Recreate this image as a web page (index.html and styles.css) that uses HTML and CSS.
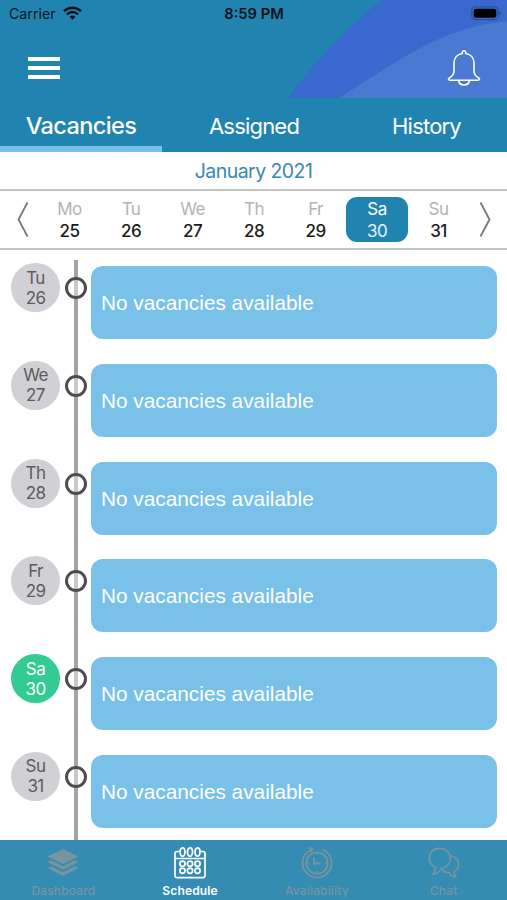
FILE: index.html
```html
<!DOCTYPE html>
<html lang="en">
<head>
    <meta charset="UTF-8">
    <meta name="viewport" content="width=device-width, initial-scale=1.0">
    <title>Schedule</title>
    <link rel="stylesheet" href="styles.css">
</head>
<body>

    <header class="header">
        <svg class="header-bg" viewBox="0 0 507 98">
            <path d="M288 98C312 66 342 30 382 0H507V98Z" fill="#3969ce"/>
            <path d="M339 98C390 67 440 26 507 21.500V98Z" fill="#4a79d1"/>
        </svg>
        <div class="status-bar">
            <div class="carrier">
                <span>Carrier</span>
                <svg width="19" height="14" viewBox="0 0 19 14" fill="none" stroke="#071217" stroke-width="2.500">
                    <path d="M1 5.200C5.800 .6 13.200 .6 18 5.200"/>
                    <path d="M4 8.300C7.200 5.300 11.800 5.300 15 8.300"/>
                    <path d="M6.500 10.700C8.300 9 10.700 9 12.500 10.700L9.500 13.700Z" fill="#071217" stroke="none"/>
                </svg>
            </div>
            <span class="time">8:59 PM</span>
            <svg class="battery" width="31" height="15" viewBox="0 0 31 15">
                <rect x=".8" y=".8" width="26.400" height="12.900" rx="4" fill="none" stroke="#2a4d98" stroke-width="1.300"/>
                <rect x="2.700" y="2.700" width="22.600" height="9.100" rx="2.300" fill="#000"/>
                <path d="M28.500 5.200C30.500 6 30.500 8.500 28.500 9.300Z" fill="#2a4d98"/>
            </svg>
        </div>
        <div class="toolbar">
            <div class="menu"><i></i><i></i><i></i></div>
            <svg class="bell" width="34" height="38" viewBox="0 0 34 38" fill="none" stroke="#fff" stroke-width="1.600" stroke-linejoin="round">
                <path d="M15.300 4.500V3.500C15.300 1.200 18.700 1.200 18.700 3.500V4.500C23.800 5.300 27 9 27 14V22C27 26 29 27.500 31.600 28.900C33 29.800 32.700 31.200 31 31.200H3C1.300 31.200 1 29.800 2.400 28.900C5 27.500 7 26 7 22V14C7 9 10.200 5.300 15.300 4.500Z"/>
                <path d="M11.500 31.500C12.500 37.500 21.500 37.500 22.500 31.500"/>
            </svg>
        </div>
    </header>

    <nav class="tabs">
        <a class="tab active"><span>Vacancies</span></a>
        <a class="tab assigned"><span>Assigned</span></a>
        <a class="tab history"><span>History</span></a>
    </nav>

    <div class="month">January 2021</div>

    <div class="week">
        <svg class="arrow" width="12" height="37" viewBox="0 0 12 37"><path d="M10.500 1.500L1.500 18.500L10.500 35.500"/></svg>
        <div class="days">
            <div class="day"><span>Mo</span><b>25</b></div>
            <div class="day"><span>Tu</span><b>26</b></div>
            <div class="day"><span>We</span><b>27</b></div>
            <div class="day"><span>Th</span><b>28</b></div>
            <div class="day"><span>Fr</span><b>29</b></div>
            <div class="day selected"><span>Sa</span><b>30</b></div>
            <div class="day"><span>Su</span><b>31</b></div>
        </div>
        <svg class="arrow" width="12" height="37" viewBox="0 0 12 37"><path d="M1.500 1.500L10.500 18.500L1.500 35.500"/></svg>
    </div>

    <main class="timeline">
        <div class="row">
            <div class="date"><span>Tu</span><span>26</span></div>
            <div class="dot"></div>
            <div class="card">No vacancies available</div>
        </div>
        <div class="row">
            <div class="date"><span>We</span><span>27</span></div>
            <div class="dot"></div>
            <div class="card">No vacancies available</div>
        </div>
        <div class="row">
            <div class="date"><span>Th</span><span>28</span></div>
            <div class="dot"></div>
            <div class="card">No vacancies available</div>
        </div>
        <div class="row">
            <div class="date"><span>Fr</span><span>29</span></div>
            <div class="dot"></div>
            <div class="card">No vacancies available</div>
        </div>
        <div class="row">
            <div class="date today"><span>Sa</span><span>30</span></div>
            <div class="dot"></div>
            <div class="card">No vacancies available</div>
        </div>
        <div class="row">
            <div class="date"><span>Su</span><span>31</span></div>
            <div class="dot"></div>
            <div class="card">No vacancies available</div>
        </div>
    </main>

    <nav class="bottom-nav">
        <a class="nav-item">
            <svg width="34" height="34" viewBox="0 0 34 34" fill="currentColor">
                <path d="M17 3L32.500 10.500L17 18L1.500 10.500Z"/>
                <path d="M1.500 16L5.200 14.200L17 20L28.800 14.200L32.500 16L17 23.800Z"/>
                <path d="M1.500 22L5.200 20.200L17 26L28.800 20.200L32.500 22L17 29.800Z"/>
            </svg>
            <span>Dashboard</span>
        </a>
        <a class="nav-item active">
            <svg width="34" height="34" viewBox="0 0 34 34" fill="none" stroke="currentColor" stroke-width="1.700">
                <path d="M6.500 5.500H4C2.700 5.500 2 6.300 2 7.500V29.500C2 31 2.700 31.700 4 31.700H30C31.300 31.700 32 31 32 29.500V7.500C32 6.300 31.300 5.500 30 5.500H27.500M2 12.500H32"/>
                <ellipse cx="9.500" cy="6" rx="2.500" ry="4.200"/>
                <ellipse cx="17" cy="6" rx="2.500" ry="4.200"/>
                <ellipse cx="24.500" cy="6" rx="2.500" ry="4.200"/>
                <circle cx="9.500" cy="17.700" r="2.600"/>
                <circle cx="17" cy="17.700" r="2.600"/>
                <circle cx="24.500" cy="17.700" r="2.600"/>
                <circle cx="9.500" cy="24.700" r="2.600"/>
                <circle cx="17" cy="24.700" r="2.600"/>
                <circle cx="24.500" cy="24.700" r="2.600"/>
            </svg>
            <span>Schedule</span>
        </a>
        <a class="nav-item">
            <svg width="34" height="34" viewBox="0 0 34 34" fill="none" stroke="currentColor" stroke-width="1.700">
                <path d="M22.500 3.500A14.500 14.500 0 1 1 8 5.700L12.500 2.700M8.500 1.800L12.500 2.700L11.200 6.500"/>
                <circle cx="17" cy="17" r="10.700"/>
                <path d="M14 11.500V17.500H20.500" stroke-width="2"/>
                <path d="M17 6.500V9M17 25V27.500M6.500 17H9M25 17H27.500"/>
            </svg>
            <span>Availability</span>
        </a>
        <a class="nav-item">
            <svg width="34" height="34" viewBox="0 0 34 34" fill="none" stroke="currentColor" stroke-width="1.700" stroke-linejoin="round">
                <path d="M12.500 2.300C6.500 2.300 2.300 6.700 2.300 12.200C2.300 16.400 4.600 19.700 8.200 21.200C8.700 24.300 7.800 26.500 5.700 28.500C10 28 12.800 25.700 14.200 22.300C19.800 21.700 23.300 17.500 23.300 12.200C23.300 6.700 18.800 2.300 12.500 2.300Z"/>
                <path d="M23.500 10C28.500 10.500 31.700 14 31.700 18.200C31.700 21.500 29.800 24.300 27 25.500C26.700 28 27.300 29.500 29 31C25.500 31 23.300 29.200 22 26.500C18.800 26.500 16.300 25.200 14.800 23"/>
            </svg>
            <span>Chat</span>
        </a>
    </nav>

</body>
</html>
```

FILE: styles.css
```css
* {
    margin: 0;
    padding: 0;
    box-sizing: border-box;
}

body {
    display: flex;
    flex-direction: column;
    width: 507px;
    height: 900px;
    overflow: hidden;
    background-color: #fff;
    font-family: Inter, "Liberation Sans", sans-serif;
}

svg {
    display: block;
    flex: none;
}

.header {
    position: relative;
    height: 98px;
    background: #2184b0;
}

.header-bg {
    position: absolute;
    top: 0;
    left: 0;
    width: 507px;
    height: 98px;
}

.status-bar {
    position: relative;
    display: grid;
    grid-template-columns: 1fr auto 1fr;
    align-items: center;
    height: 27px;
    padding: 0 5px 0 9px;
    color: #071217;
    font-size: 14.200px;
}

.carrier {
    display: flex;
    align-items: center;
    gap: 7px;
}

.carrier svg {
    margin-bottom: 2px;
}

.time {
    padding-right: 3px;
    font-size: 14.700px;
    font-weight: 600;
}

.battery {
    justify-self: end;
}

.toolbar {
    position: relative;
    display: flex;
    justify-content: space-between;
    padding: 22px 26px 0 28px;
}

.menu {
    display: flex;
    flex-direction: column;
    gap: 5px;
    padding-top: 8px;
}

.menu i {
    width: 32px;
    height: 4px;
    background: #fff;
}

.tabs {
    display: flex;
    height: 54px;
    background: #2184b0;
    color: #fff;
    font-size: 22px;
    letter-spacing: -0.8px;
}

.tab {
    display: flex;
    justify-content: center;
    width: 162px;
    padding-top: 14px;
    line-height: 28px;
}

.tab.active {
    border-bottom: 6px solid #78c0e8;
    font-size: 23.500px;
    font-weight: 500;
    letter-spacing: -0.600px;
}

.assigned {
    width: 184px;
}

.history {
    width: 161px;
}

.month {
    height: 39px;
    border-bottom: 2px solid #c3c3c3;
    color: #3589b4;
    font-size: 19.500px;
    letter-spacing: -0.550px;
    line-height: 38px;
    text-align: center;
}

.week {
    display: flex;
    justify-content: space-between;
    height: 59px;
    padding: 6px 16px 0 17px;
    border-bottom: 2px solid #c3c3c3;
}

.arrow {
    margin-top: 4px;
    fill: none;
    stroke: #777;
    stroke-width: 1.800;
}

.days {
    display: flex;
}

.day {
    display: flex;
    flex-direction: column;
    align-items: center;
    width: 61.500px;
    height: 45px;
    padding-top: 1px;
    border-radius: 11px;
    color: #b3b3b3;
    font-size: 17px;
    letter-spacing: -0.600px;
    line-height: 22px;
}

.day b {
    color: #1c1c1c;
    font-weight: 500;
}

.day.selected {
    background: #2184b0;
    color: #fff;
}

.day.selected b {
    color: #e4f5fc;
    font-weight: 400;
}

.timeline {
    flex: 1;
    min-height: 0;
    margin-top: 10px;
    padding: 3px 10px 0 11px;
    overflow: hidden;
    background: linear-gradient(#a4a4a4, #a4a4a4) 73.500px 0 / 4px 100% no-repeat;
}

.row {
    display: flex;
    height: 97.750px;
}

.date {
    display: flex;
    flex-direction: column;
    align-items: center;
    justify-content: center;
    width: 49px;
    height: 49px;
    border-radius: 50%;
    background: #d0d0d5;
    color: #5c5c60;
    font-size: 17px;
    letter-spacing: -0.600px;
    line-height: 20px;
}

.date.today {
    background: #32cb94;
    color: #fff;
}

.dot {
    width: 22px;
    height: 22px;
    margin: 14px 4.500px 0;
    border: 3px solid #4d4d4d;
    border-radius: 50%;
    background: linear-gradient(#c9c9c9, #c9c9c9) center / 4px 100% no-repeat #fff;
}

.card {
    flex: 1;
    height: 73px;
    margin-top: 3px;
    padding-left: 10px;
    border-radius: 12px;
    background: #79c1e9;
    color: #fff;
    font-family: "Liberation Sans", sans-serif;
    font-size: 20.800px;
    line-height: 74px;
}

.bottom-nav {
    display: flex;
    height: 60px;
    background: #348cb2;
}

.nav-item {
    display: flex;
    flex-direction: column;
    align-items: center;
    flex: 1;
    padding-top: 6px;
    color: #77949f;
    font-size: 12px;
    font-weight: 500;
    letter-spacing: 0.150px;
    line-height: 16px;
}

.nav-item span {
    margin-top: 3px;
}

.nav-item.active {
    color: #fff;
    font-weight: 600;
}
```
